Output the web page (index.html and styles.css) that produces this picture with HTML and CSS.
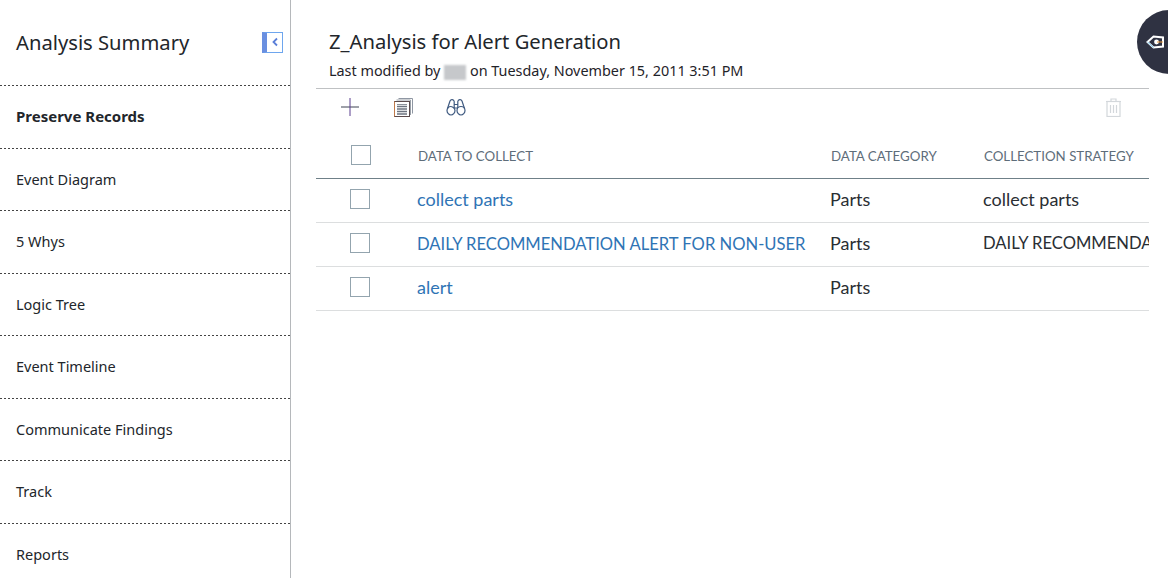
FILE: index.html
```html
<!DOCTYPE html>
<html lang="en">
<head>
  <meta charset="UTF-8">
  <title>Analysis Summary</title>
  <link rel="stylesheet" href="styles.css">
</head>
<body>
  <div class="page">
    <nav class="sidebar">
      <div class="side-head">
        <span class="side-title">Analysis Summary</span>
        <span class="collapse">
          <svg width="10" height="12" viewBox="0 0 10 12"><path d="M7 2.500 3.500 6 7 9.500" fill="none" stroke="#5b7fd8" stroke-width="1.800"/></svg>
        </span>
      </div>
      <a class="side-item active">Preserve Records</a>
      <a class="side-item">Event Diagram</a>
      <a class="side-item">5 Whys</a>
      <a class="side-item">Logic Tree</a>
      <a class="side-item">Event Timeline</a>
      <a class="side-item">Communicate Findings</a>
      <a class="side-item">Track</a>
      <a class="side-item">Reports</a>
    </nav>

    <main class="main">
      <header class="head">
        <h1>Z_Analysis for Alert Generation</h1>
        <p>Last modified by <span class="blur-name"></span> on Tuesday, November 15, 2011 3:51 PM</p>
      </header>

      <div class="toolbar">
        <svg class="tool-add" width="18" height="18" viewBox="0 0 18 18"><path d="M0 9h18" stroke="#3d4252" fill="none"/><path d="M9 0v18" stroke="#5b3f8f" fill="none"/></svg>
        <svg class="tool-list" width="19" height="19" viewBox="0 0 19 19" fill="none">
          <path d="M4.500 .5h14v15" stroke="#8f97a3"/>
          <path d="M2.500 2h14v15" stroke="#9aa0a8"/>
          <rect x=".5" y="3.500" width="15" height="15" fill="#fff" stroke="#5a4a4c"/>
          <path d="M.5 3.500v15" stroke="#c07a4a"/>
          <path d="M3 6.500h10" stroke="#8c929b"/>
          <path d="M3 8.500h10M3 11h10M3 13.500h10M3 16h10" stroke="#6d7480" stroke-width="1.300"/>
        </svg>
        <svg class="tool-find" width="20" height="18" viewBox="0 0 20 18" fill="none" stroke="#3f5a80" stroke-width="1.200">
          <path d="M1 12.500C1 10 3 8.500 4.500 8.500S9 10 9 12.500 7 17 5 17 1 15 1 12.500z"/>
          <path d="M11 12.500C11 10 13 8.500 15 8.500S19 10 19 12.500 17 17 15 17 11 15 11 12.500z"/>
          <path d="M1.500 10.500 4 3a2.200 2.200 0 0 1 4.200.5V10M18.500 10.500 16 3a2.200 2.200 0 0 0-4.200.5V10M8.200 10h3.600M8.200 6.500h3.600"/>
        </svg>
        <svg class="tool-trash" width="17" height="19" viewBox="0 0 17 19" fill="none" stroke="#d3d7db" stroke-width="1.200">
          <path d="M1 3.500h15M6 3.500V1h5v2.500"/>
          <rect x="2" y="3.500" width="13" height="15"/>
          <path d="M5.500 7v8M8.500 7v8M11.500 7v8"/>
        </svg>
      </div>

      <table class="grid">
        <colgroup>
          <col class="col-check"><col class="col-name"><col class="col-cat"><col class="col-strat">
        </colgroup>
        <thead>
          <tr>
            <th class="head-check"><span class="check"></span></th>
            <th>DATA TO COLLECT</th>
            <th>DATA CATEGORY</th>
            <th>COLLECTION STRATEGY</th>
          </tr>
        </thead>
        <tbody>
          <tr>
            <td><span class="check"></span></td>
            <td><a class="link">collect parts</a></td>
            <td>Parts</td>
            <td>collect parts</td>
          </tr>
          <tr>
            <td><span class="check"></span></td>
            <td><a class="link caps">DAILY RECOMMENDATION ALERT FOR NON-USER</a></td>
            <td>Parts</td>
            <td class="caps">DAILY RECOMMENDATION ALERT FOR NON-USER</td>
          </tr>
          <tr>
            <td><span class="check"></span></td>
            <td><a class="link">alert</a></td>
            <td>Parts</td>
            <td></td>
          </tr>
        </tbody>
      </table>
    </main>
  </div>

  <div class="fab">
    <svg width="20" height="16" viewBox="0 0 20 16" fill="none">
      <path d="M1.500 8 7.500 2.500 17 3.500V12.500L7.500 13.500z" stroke="#fff" stroke-width="2"/>
      <path d="M1.500 8 7.500 13.500" stroke="#6fc0ea" stroke-width="1"/>
      <circle cx="10.500" cy="8" r="2.400" fill="#fff"/>
      <path d="M11 8h6" stroke="#f0a040" stroke-width="1"/>
    </svg>
  </div>
</body>
</html>
```

FILE: styles.css
```css
html, body {
  margin: 0;
  height: 100%;
  overflow: hidden;
  background: #fff;
}

body {
  color: #1f2329;
  font-family: "Noto Sans", sans-serif;
}

.page {
  display: flex;
  height: 578px;
}

.sidebar {
  width: 290px;
  flex: none;
  border-right: 1px solid #b5b8bb;
  overflow: hidden;
}

.side-head,
.side-item {
  box-sizing: border-box;
  background: repeating-linear-gradient(90deg, #444 0 2px, transparent 2px 4px) left bottom / 100% 1px no-repeat;
}

.side-head {
  height: 86px;
  display: flex;
  align-items: center;
  justify-content: space-between;
  padding: 0 7px 2px 16px;
}

.side-title {
  font-size: 20.200px;
  color: #22262b;
}

.collapse {
  width: 21px;
  height: 21px;
  display: flex;
  align-items: center;
  justify-content: center;
  border: 1px solid #6ea6ee;
  border-left: 5px solid #6a8fe0;
  box-sizing: border-box;
}

.side-item {
  display: flex;
  align-items: center;
  height: 62.500px;
  padding: 0 0 2px 16px;
  font-size: 14.500px;
  color: #22262b;
}

.side-item.active {
  font-weight: 700;
  font-size: 15px;
}

.main {
  flex: 1;
  min-width: 0;
  padding: 0 19px 0 25px;
  overflow: hidden;
}

.head {
  height: 88px;
  padding-left: 13px;
  border-bottom: 1px solid #bfc1c3;
  box-sizing: content-box;
}

.head h1 {
  margin: 0;
  padding-top: 28px;
  font-size: 20.200px;
  line-height: 27px;
  font-weight: 400;
  color: #22262b;
}

.head p {
  margin: 6px 0 0;
  font-size: 14.400px;
  line-height: 19px;
}

.blur-name {
  display: inline-block;
  width: 22px;
  height: 15px;
  vertical-align: -4px;
  background: #c6c8cb;
  filter: blur(1px);
}

.toolbar {
  height: 36px;
  display: flex;
  align-items: center;
  padding: 0 0 0 25px;
}

.tool-add { margin-right: 35px; }
.tool-list { margin-right: 33px; }
.tool-trash { margin-left: auto; margin-right: 27px; }

.grid {
  width: 833px;
  table-layout: fixed;
  border-collapse: collapse;
  font-family: "Lato", sans-serif;
}

.col-check { width: 101px; }
.col-name { width: 413px; }
.col-cat { width: 153px; }
.col-strat { width: 166px; }

.grid th {
  height: 53px;
  padding: 9px 0 0 1px;
  box-sizing: border-box;
  text-align: left;
  font-size: 13.300px;
  font-weight: 400;
  color: #5e6d7a;
  border-bottom: 1px solid #6f8088;
  white-space: nowrap;
  overflow: hidden;
}

.grid .head-check {
  padding: 7px 0 0;
}

.grid td {
  height: 44px;
  padding: 0 0 2px;
  box-sizing: border-box;
  font-size: 18px;
  color: #2a2e33;
  border-bottom: 1px solid #dcdedf;
  white-space: nowrap;
  overflow: hidden;
}

.grid .caps {
  font-size: 16.600px;
}

.link {
  color: #2f74b5;
}

.check {
  display: block;
  width: 18px;
  height: 18px;
  margin-left: 34px;
  border: 1px solid #93a4ae;
}

.head-check .check {
  margin-left: 35px;
}

.fab {
  position: absolute;
  top: 10px;
  left: 1137px;
  width: 64px;
  height: 64px;
  border-radius: 50%;
  background: #2f3242;
  display: flex;
  align-items: center;
  padding-left: 9px;
  box-sizing: border-box;
}
```
